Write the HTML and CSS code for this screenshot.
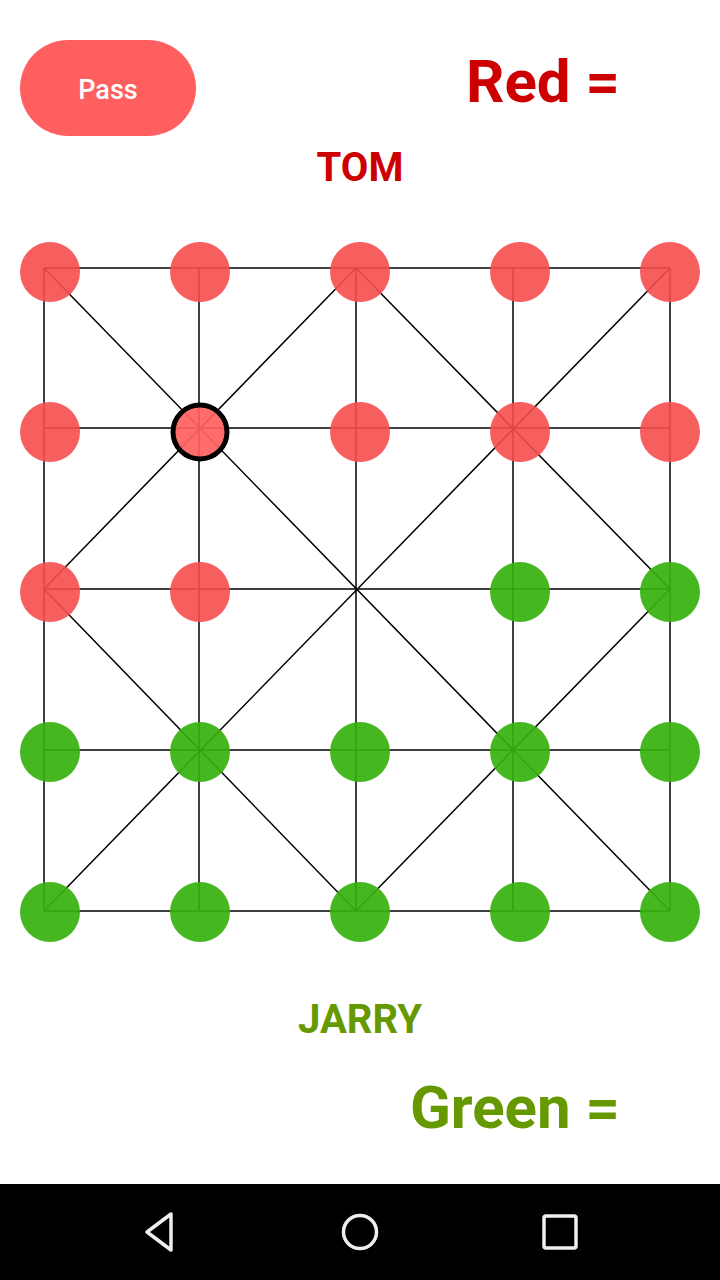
FILE: index.html
```html
<!DOCTYPE html>
<html>
<head>
<meta charset="utf-8">
<link rel="stylesheet" href="styles.css">
</head>
<body>
<div class="screen">
  <div class="header">
    <button class="pass">Pass</button>
    <div class="score red">Red =</div>
  </div>
  <div class="player tom">TOM</div>
  <svg class="board" width="720" height="720" viewBox="0 232 720 720">
    <g class="lines">
      <line x1="44" y1="268" x2="670" y2="268"/>
      <line x1="44" y1="428" x2="670" y2="428"/>
      <line x1="44" y1="589" x2="670" y2="589"/>
      <line x1="44" y1="750" x2="670" y2="750"/>
      <line x1="44" y1="911" x2="670" y2="911"/>
      <line x1="44" y1="268" x2="44" y2="911"/>
      <line x1="199" y1="268" x2="199" y2="911"/>
      <line x1="356" y1="268" x2="356" y2="911"/>
      <line x1="513" y1="268" x2="513" y2="911"/>
      <line x1="670" y1="268" x2="670" y2="911"/>
      <line x1="44" y1="268" x2="670" y2="911"/>
      <line x1="670" y1="268" x2="44" y2="911"/>
      <line x1="356" y1="268" x2="44" y2="589"/>
      <line x1="356" y1="268" x2="670" y2="589"/>
      <line x1="44" y1="589" x2="356" y2="911"/>
      <line x1="670" y1="589" x2="356" y2="911"/>
    </g>
    <g class="red-pcs">
      <circle cx="50" cy="272" r="30"/>
      <circle cx="200" cy="272" r="30"/>
      <circle cx="360" cy="272" r="30"/>
      <circle cx="520" cy="272" r="30"/>
      <circle cx="670" cy="272" r="30"/>
      <circle cx="50" cy="432" r="30"/>
      <circle cx="360" cy="432" r="30"/>
      <circle cx="520" cy="432" r="30"/>
      <circle cx="670" cy="432" r="30"/>
      <circle cx="50" cy="592" r="30"/>
      <circle cx="200" cy="592" r="30"/>
      <circle class="selected" cx="200" cy="432" r="27"/>
    </g>
    <g class="green-pcs">
      <circle cx="520" cy="592" r="30"/>
      <circle cx="670" cy="592" r="30"/>
      <circle cx="50" cy="752" r="30"/>
      <circle cx="200" cy="752" r="30"/>
      <circle cx="360" cy="752" r="30"/>
      <circle cx="520" cy="752" r="30"/>
      <circle cx="670" cy="752" r="30"/>
      <circle cx="50" cy="912" r="30"/>
      <circle cx="200" cy="912" r="30"/>
      <circle cx="360" cy="912" r="30"/>
      <circle cx="520" cy="912" r="30"/>
      <circle cx="670" cy="912" r="30"/>
    </g>
  </svg>
  <div class="player jarry">JARRY</div>
  <div class="footer">
    <div class="score green">Green =</div>
  </div>
</div>
<nav class="navbar">
  <svg class="nav-icon" width="40" height="44" viewBox="0 0 40 44">
    <path d="M31 4 L31 40 L7 22 Z" fill="none" stroke="#eee" stroke-width="3.5" stroke-linejoin="round"/>
  </svg>
  <svg class="nav-icon" width="44" height="44" viewBox="0 0 44 44">
    <circle cx="22" cy="22" r="16.5" fill="none" stroke="#eee" stroke-width="3.5"/>
  </svg>
  <svg class="nav-icon" width="40" height="44" viewBox="0 0 40 44">
    <rect x="4" y="6" width="32" height="32" rx="2" fill="none" stroke="#eee" stroke-width="3.5"/>
  </svg>
</nav>
</body>
</html>
```
FILE: styles.css
```css
html, body {
  margin: 0;
  padding: 0;
  background: #fff;
}
body {
  width: 720px;
  height: 1280px;
  overflow: hidden;
  font-family: Roboto, "Liberation Sans", sans-serif;
}
.screen {
  height: 1184px;
  display: flex;
  flex-direction: column;
  background: #fff;
}
.header {
  display: flex;
  justify-content: space-between;
  align-items: flex-start;
  padding: 40px 100px 0 20px;
}
.pass {
  width: 176px;
  height: 96px;
  border: none;
  border-radius: 48px;
  background: #ff5f5f;
  color: #fff;
  font-family: Roboto, "Liberation Sans", sans-serif;
  font-size: 27px;
  font-weight: 500;
  padding: 4px 0 0 0;
}
.score {
  font-size: 60px;
  font-weight: 700;
  line-height: 1;
  white-space: pre;
}
.red {
  color: #cc0000;
  margin-top: 12px;
}
.green {
  color: #669900;
}
.player {
  text-align: center;
  font-size: 40px;
  font-weight: 700;
  line-height: 40px;
  height: 40px;
}
.tom {
  color: #cc0000;
  margin-top: 12px;
}
.board {
  display: block;
  margin-top: 44px;
}
.lines line {
  stroke: #000;
  stroke-width: 1.5;
}
.red-pcs circle {
  fill: #f64d4d;
  fill-opacity: 0.9;
}
.red-pcs .selected {
  fill: #ff5f5f;
  fill-opacity: 0.92;
  stroke: #000;
  stroke-width: 5;
}
.green-pcs circle {
  fill: #36b10e;
  fill-opacity: 0.92;
}
.jarry {
  color: #669900;
  margin-top: 48px;
}
.footer {
  display: flex;
  justify-content: flex-end;
  padding: 38px 100px 0 0;
}
.navbar {
  height: 96px;
  background: #000;
  display: flex;
  align-items: center;
  justify-content: space-between;
  padding: 0 140px;
}
.nav-icon {
  display: block;
}
```
